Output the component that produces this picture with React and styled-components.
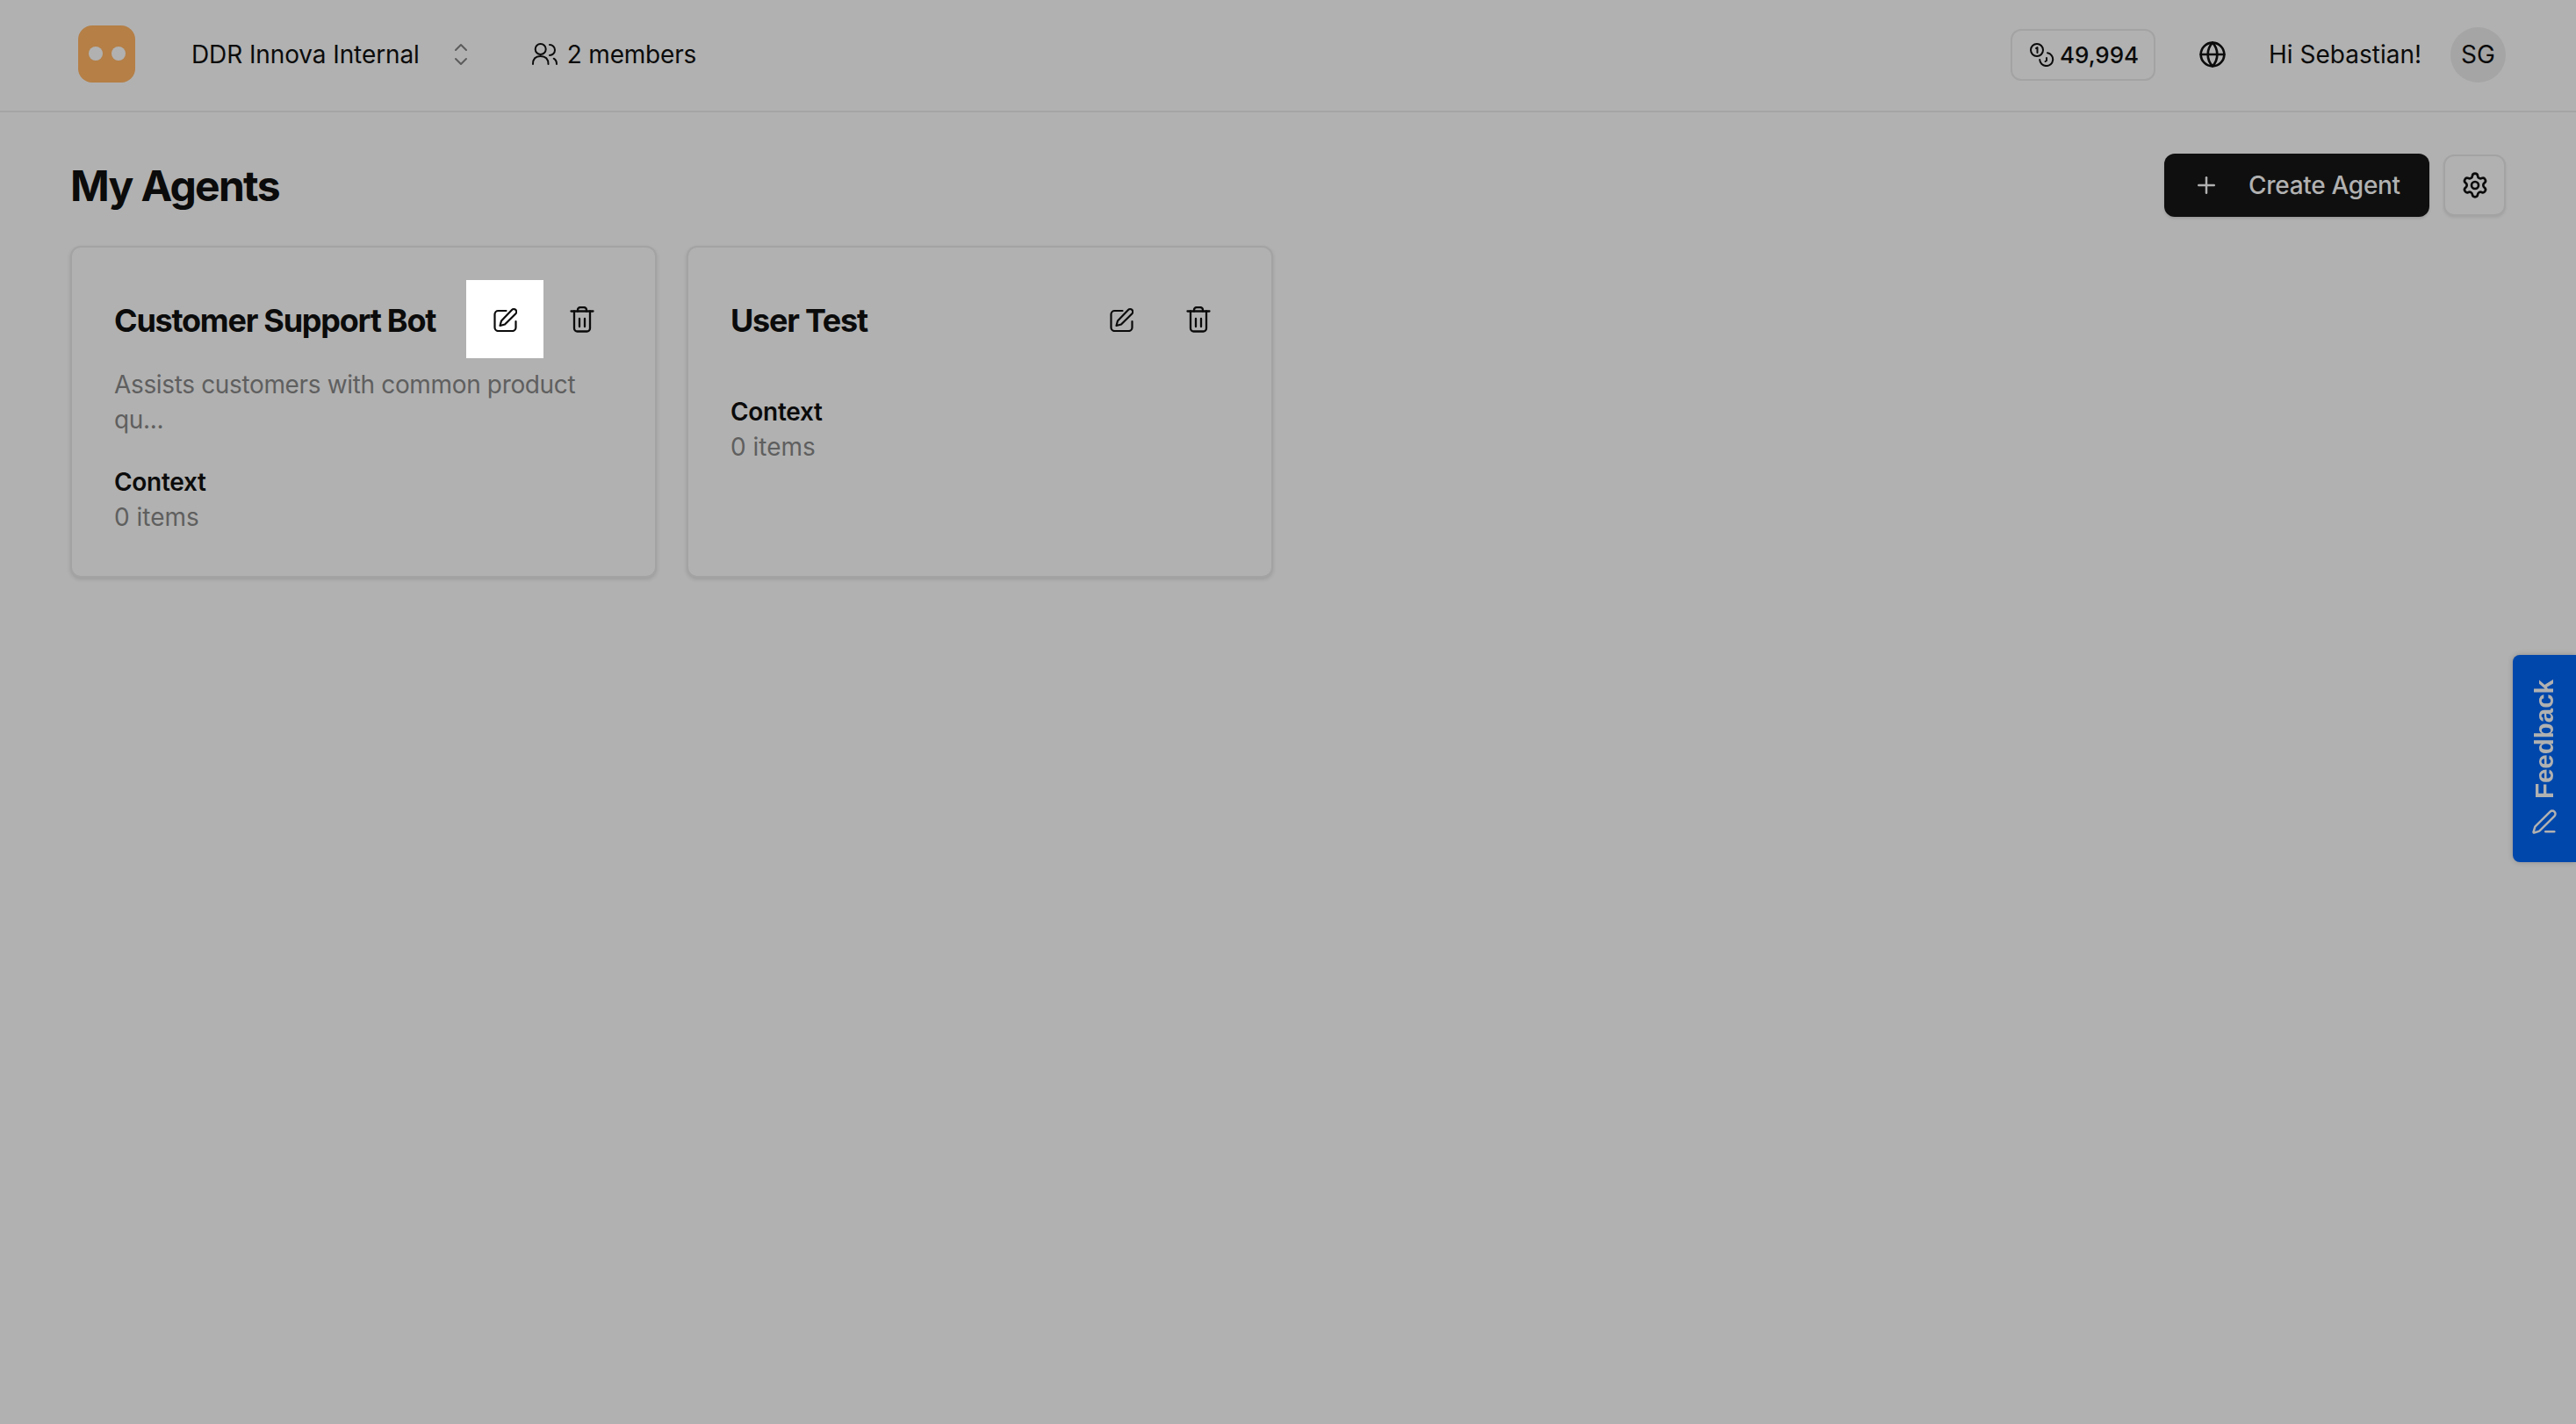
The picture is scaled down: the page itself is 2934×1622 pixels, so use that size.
import React from "react";
import styled, { createGlobalStyle } from "styled-components";
import { Globe, Plus, Settings, PenLine } from "lucide-react";

const GlobalStyle = createGlobalStyle`
  html, body {
    margin: 0;
    padding: 0;
    background: #b1b1b1;
  }
  body {
    font-family: "Inter", "Liberation Sans", sans-serif;
    color: #0b0b0b;
  }
`;

const Page = styled.div`
  min-height: 1622px;
  background: #b1b1b1;
`;

const Header = styled.header`
  box-sizing: border-box;
  height: 128px;
  display: flex;
  align-items: center;
  justify-content: space-between;
  padding: 0 80px 2px 89px;
  border-bottom: 2px solid #a5a5a5;
`;

const HeaderGroup = styled.div`
  display: flex;
  align-items: center;
`;

const Logo = styled.div`
  width: 65px;
  height: 65px;
  margin-top: -2px;
  border-radius: 16px;
  background: #b57f46;
  display: flex;
  align-items: center;
  justify-content: center;
  gap: 10px;
`;

const LogoDot = styled.span`
  width: 16px;
  height: 16px;
  border-radius: 50%;
  background: #b1b1b1;
`;

const OrgName = styled.span`
  margin-left: 64px;
  font-size: 28px;
  line-height: 40px;
  letter-spacing: -0.1px;
`;

const OrgSwitch = styled.svg`
  margin-left: 35px;
  width: 24px;
  height: 28px;
  fill: none;
  stroke: #5c5c5c;
  stroke-width: 2;
  stroke-linecap: round;
  stroke-linejoin: round;
`;

const Members = styled.div`
  margin-left: 68px;
  display: flex;
  align-items: center;
  gap: 11px;
  font-size: 28px;
  line-height: 40px;
  letter-spacing: -0.2px;
`;

const LineIcon = styled.svg`
  flex: none;
  fill: none;
  stroke: currentColor;
  stroke-width: ${(p) => p.$weight || 2};
  stroke-linecap: round;
  stroke-linejoin: round;
`;

const Credits = styled.div`
  box-sizing: border-box;
  width: 165px;
  height: 59px;
  display: flex;
  align-items: center;
  justify-content: center;
  gap: 6px;
  padding-left: 3px;
  border: 2px solid #a3a3a3;
  border-radius: 12px;
  font-size: 26px;
  font-weight: 500;
`;

const GlobeSlot = styled.div`
  margin-left: 49px;
  display: flex;
`;

const Greeting = styled.span`
  margin-left: 48px;
  font-size: 28px;
  line-height: 40px;
`;

const Avatar = styled.div`
  margin-left: 33px;
  width: 63px;
  height: 63px;
  border-radius: 50%;
  background: #a5a5a5;
  display: flex;
  align-items: center;
  justify-content: center;
  font-size: 28px;
`;

const Main = styled.main`
  padding: 47px 80px 0;
`;

const TitleRow = styled.div`
  display: flex;
  align-items: center;
  justify-content: space-between;
  margin-bottom: 33px;
`;

const Title = styled.h1`
  margin: 0;
  padding-top: 2px;
  font-size: 48px;
  line-height: 70px;
  font-weight: 700;
  letter-spacing: -1.7px;
`;

const TitleActions = styled.div`
  display: flex;
  align-items: center;
  gap: 16px;
`;

const CreateButton = styled.button`
  box-sizing: border-box;
  width: 302px;
  height: 72px;
  display: flex;
  align-items: center;
  gap: 33px;
  padding: 0 0 0 33px;
  border: 0;
  border-radius: 12px;
  background: #0f0f0f;
  color: #b1b1b1;
  font-family: inherit;
  font-size: 28px;
  font-weight: 500;
  letter-spacing: -0.3px;
  box-shadow: 0 2px 3px rgba(0, 0, 0, 0.12);
`;

const SettingsButton = styled.button`
  box-sizing: border-box;
  width: 71px;
  height: 70px;
  display: flex;
  align-items: center;
  justify-content: center;
  padding: 0;
  border: 2px solid #a3a3a3;
  border-radius: 12px;
  background: #b1b1b1;
  color: #0b0b0b;
  box-shadow: 0 2px 3px rgba(0, 0, 0, 0.08);
`;

const Cards = styled.div`
  display: grid;
  grid-template-columns: repeat(auto-fill, 668px);
  gap: 34px;
`;

const Card = styled.article`
  box-sizing: border-box;
  height: 378px;
  padding: 37px 39px 0 48px;
  border: 2px solid #a3a3a3;
  border-radius: 12px;
  background: #b1b1b1;
  box-shadow: 0 2px 4px rgba(0, 0, 0, 0.12);
`;

const CardHead = styled.div`
  display: flex;
  align-items: center;
  justify-content: space-between;
  margin-bottom: 10px;
`;

const CardTitle = styled.h2`
  margin: 0;
  padding-top: 2px;
  font-size: 36px;
  line-height: 48px;
  font-weight: 700;
  letter-spacing: -1.25px;
`;

const CardActions = styled.div`
  display: flex;
`;

const IconButton = styled.button`
  width: 88px;
  height: 89px;
  display: flex;
  align-items: center;
  justify-content: center;
  padding: 0;
  border: 0;
  background: ${(p) => (p.$spotlight ? "#ffffff" : "transparent")};
  color: #0b0b0b;
`;

const Description = styled.p`
  margin: 0;
  font-size: 28px;
  line-height: 40px;
  letter-spacing: -0.35px;
  color: #5f5f5f;
`;

const ContextBlock = styled.div`
  margin-top: ${(p) => (p.$afterText ? "31px" : "41px")};
`;

const ContextLabel = styled.div`
  font-size: 28px;
  line-height: 40px;
  font-weight: 600;
  letter-spacing: -0.3px;
`;

const ContextCount = styled.div`
  font-size: 28px;
  line-height: 40px;
  color: #5f5f5f;
`;

const FeedbackTab = styled.div`
  position: fixed;
  top: 746px;
  right: 0;
  box-sizing: border-box;
  width: 72px;
  height: 236px;
  display: flex;
  flex-direction: column;
  align-items: center;
  justify-content: flex-end;
  gap: 11px;
  padding-bottom: 31px;
  border-radius: 8px 0 0 8px;
  background: #0047ab;
  color: #b1b1b1;
  box-shadow: 0 0 6px rgba(0, 0, 0, 0.2);
`;

const FeedbackLabel = styled.span`
  writing-mode: vertical-rl;
  transform: rotate(180deg);
  font-family: "Liberation Sans", Arial, sans-serif;
  font-size: 29.5px;
  font-weight: 700;
  line-height: 1;
`;

const FeedbackPen = styled.span`
  display: flex;
`;

const agents = [
  { name: "Customer Support Bot", description: "Assists customers with common product qu...", spotlight: true },
  { name: "User Test" },
];

const EditIcon = () => (
  <LineIcon width="28" height="28" viewBox="-1.5 0 28 28" $weight={2.2}>
    <path d="M14 4 H5 a4 4 0 0 0 -4 4 V23 a4 4 0 0 0 4 4 H21 a4 4 0 0 0 4 -4 V16" />
    <path d="M7 21 L8.5 15.5 L20.5 3 a3 3 0 0 1 4.4 4.2 L12.5 19.5 Z" />
  </LineIcon>
);

const TrashIcon = () => (
  <LineIcon width="28" height="30" viewBox="0 0 28 30" $weight={2.3}>
    <path d="M1.5 5.5 H26.5" />
    <path d="M5 5.5 V25 a3.5 3.5 0 0 0 3.5 3.5 H19.5 a3.5 3.5 0 0 0 3.5 -3.5 V5.5" />
    <path d="M9 5.5 V4 a3 3 0 0 1 3 -3 H16 a3 3 0 0 1 3 3 V5.5" />
    <path d="M11 14 V23" />
    <path d="M17 14 V23" />
  </LineIcon>
);

const MembersIcon = () => (
  <LineIcon width="30" height="28" viewBox="0 0 30 28">
    <circle cx="10.7" cy="8" r="6" />
    <path d="M2 25 C2 19 5 16 10.5 16 C16 16 19.5 19 19.5 25" />
    <path d="M21 3 A6 6 0 0 1 21 15" />
    <path d="M25.7 18.7 C28 20 29 22 29 25" />
  </LineIcon>
);

const CoinsIcon = () => (
  <LineIcon width="28" height="28" viewBox="0 0 28 28">
    <circle cx="8" cy="9" r="7" />
    <path d="M7 7 L8.5 6 V12" />
    <path d="M20 12.2 A7.5 7.5 0 1 1 11.2 20" />
    <path d="M19 18 V21 L17.5 22" />
  </LineIcon>
);

function AgentCard({ agent }) {
  return (
    <Card>
      <CardHead>
        <CardTitle>{agent.name}</CardTitle>
        <CardActions>
          <IconButton $spotlight={agent.spotlight}>
            <EditIcon />
          </IconButton>
          <IconButton>
            <TrashIcon />
          </IconButton>
        </CardActions>
      </CardHead>
      {agent.description && <Description>{agent.description}</Description>}
      <ContextBlock $afterText={Boolean(agent.description)}>
        <ContextLabel>Context</ContextLabel>
        <ContextCount>0 items</ContextCount>
      </ContextBlock>
    </Card>
  );
}

export default function App() {
  return (
    <Page>
      <GlobalStyle />
      <Header>
        <HeaderGroup>
          <Logo>
            <LogoDot />
            <LogoDot />
          </Logo>
          <OrgName>DDR Innova Internal</OrgName>
          <OrgSwitch viewBox="0 0 24 28">
            <path d="M6 9 L12 3 L18 9" />
            <path d="M6 19 L12 25 L18 19" />
          </OrgSwitch>
          <Members>
            <MembersIcon />
            2 members
          </Members>
        </HeaderGroup>
        <HeaderGroup>
          <Credits>
            <CoinsIcon />
            49,994
          </Credits>
          <GlobeSlot>
            <Globe size={32} strokeWidth={2} />
          </GlobeSlot>
          <Greeting>Hi Sebastian!</Greeting>
          <Avatar>SG</Avatar>
        </HeaderGroup>
      </Header>
      <Main>
        <TitleRow>
          <Title>My Agents</Title>
          <TitleActions>
            <CreateButton>
              <Plus size={30} strokeWidth={2} />
              Create Agent
            </CreateButton>
            <SettingsButton>
              <Settings size={32} strokeWidth={2} />
            </SettingsButton>
          </TitleActions>
        </TitleRow>
        <Cards>
          {agents.map((agent) => (
            <AgentCard key={agent.name} agent={agent} />
          ))}
        </Cards>
      </Main>
      <FeedbackTab>
        <FeedbackLabel>Feedback</FeedbackLabel>
        <FeedbackPen>
          <PenLine size={30} strokeWidth={2} />
        </FeedbackPen>
      </FeedbackTab>
    </Page>
  );
}
